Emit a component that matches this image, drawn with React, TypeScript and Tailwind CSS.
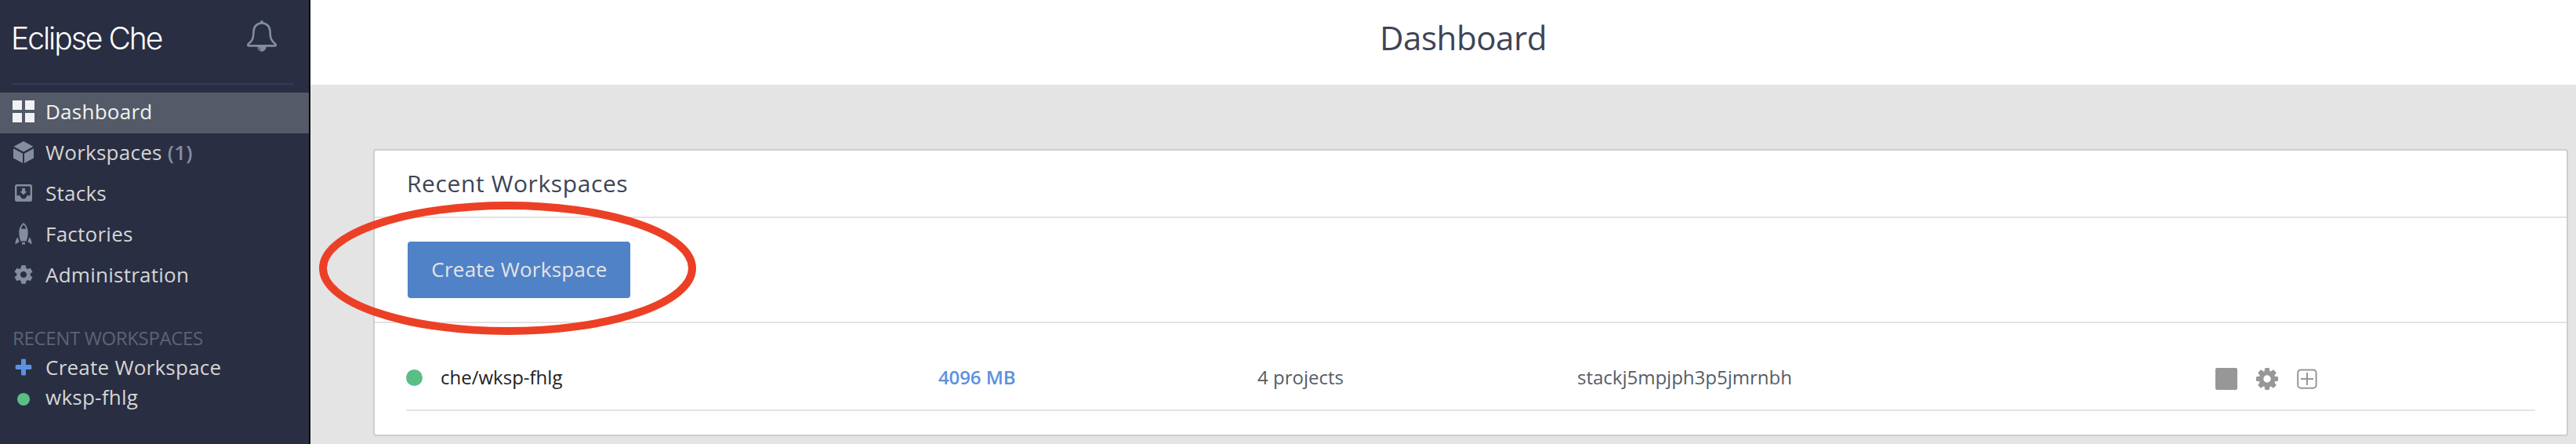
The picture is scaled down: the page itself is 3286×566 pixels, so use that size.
import type { ReactNode } from "react";

const NAV_TEXT = "text-[26px] leading-[52px] tracking-[0.25px] whitespace-nowrap";

function BellIcon() {
  return (
    <svg className="h-[42px] w-[40px]" viewBox="0 0 40 42" fill="none" stroke="#848d9f" strokeWidth="2.6" strokeLinejoin="round">
      <circle cx="20" cy="3" r="2" fill="#848d9f" stroke="none" />
      <path d="M20 4.500C13.500 4.500 9.700 9 9.500 15C9.200 24 8.400 26.500 2.600 31.200C1.900 32.200 2.200 33.400 3.600 33.400H36.400C37.800 33.400 38.100 32.200 37.400 31.200C31.600 26.500 30.800 24 30.500 15C30.300 9 26.500 4.500 20 4.500Z" />
      <path d="M14.400 34a5.600 6.800 0 0 0 11.200 0z" fill="#848d9f" stroke="none" />
      <path d="M16.200 35.400a4.200 4.200 0 0 0 2.600 3.500" stroke="#292e42" strokeWidth="0.800" />
    </svg>
  );
}

function GridIcon() {
  return (
    <svg className="size-[28px]" viewBox="0 0 28 28" fill="#f2f2f2">
      <path d="M0 0h12v12H0zM16 0h12v12H16zM0 16h12v12H0zM16 16h12v12H16z" />
    </svg>
  );
}

function CubeIcon() {
  return (
    <svg className="size-[28px]" viewBox="0 0 28 28" fill="#848d9f">
      <path d="M14 0L26.400 6.700L14 13.400L1.600 6.700ZM1 9.300L13 15.700V28L1 21.400ZM27 9.300L15 15.700V28L27 21.400Z" />
    </svg>
  );
}

function InboxIcon() {
  return (
    <svg className="size-[28px]" viewBox="0 0 28 28" fill="#848d9f">
      <path fillRule="evenodd" d="M5.500 3h17a2.500 2.500 0 0 1 2.500 2.500v17a2.500 2.500 0 0 1-2.500 2.500h-17a2.500 2.500 0 0 1-2.500-2.500v-17a2.500 2.500 0 0 1 2.500-2.500zM5.400 5.400v11.800h4.400a4.200 4.200 0 0 0 8.400 0h4.400V5.400z" />
      <path d="M12 8h4v4h2.600L14 16.600L9.400 12H12z" />
    </svg>
  );
}

function RocketIcon() {
  return (
    <svg className="size-[28px]" viewBox="0 0 28 28" fill="#848d9f">
      <path fillRule="evenodd" d="M14 0C16.800 2.200 19.700 6.500 19.700 12C19.700 17 18.500 20.500 17.600 23.600H10.400C9.500 20.500 8.300 17 8.300 12C8.300 6.500 11.200 2.200 14 0ZM14 2.600C12.600 3.900 11.300 5.600 10.900 7.800H17.100C16.700 5.600 15.400 3.900 14 2.600Z" />
      <path d="M12 25h4v2.600h-4zM6.600 18.600L8.600 24.200L3.400 27.600C3.600 24.300 4.200 20.500 6.600 18.600ZM21.400 18.600L19.400 24.200L24.600 27.600C24.400 24.300 23.800 20.500 21.400 18.600Z" />
    </svg>
  );
}

function SettingsIcon() {
  return (
    <svg className="size-[28px]" viewBox="0 0 24 24" fill="#848d9f">
      <path d="M19.430 12.980c.040-.320.070-.640.070-.980s-.030-.660-.070-.980l2.110-1.650c.190-.150.240-.420.120-.640l-2-3.460c-.120-.220-.390-.300-.610-.220l-2.490 1c-.520-.400-1.080-.730-1.690-.980l-.380-2.650C14.460 2.180 14.250 2 14 2h-4c-.250 0-.460.180-.490.420l-.380 2.650c-.610.250-1.170.590-1.690.980l-2.490-1c-.230-.090-.490 0-.610.220l-2 3.460c-.130.220-.070.490.120.640l2.110 1.650c-.040.320-.070.650-.070.980s.030.660.070.980l-2.110 1.650c-.190.150-.240.420-.120.640l2 3.460c.120.220.390.300.610.220l2.490-1c.520.400 1.080.730 1.690.980l.380 2.650c.030.240.240.420.490.420h4c.250 0 .460-.180.490-.420l.380-2.650c.610-.250 1.170-.590 1.690-.980l2.490 1c.230.090.490 0 .610-.220l2-3.460c.120-.220.070-.490-.120-.640l-2.110-1.650zM12 15.500c-1.930 0-3.500-1.570-3.500-3.500s1.570-3.500 3.500-3.500 3.500 1.570 3.500 3.500-1.570 3.500-3.500 3.500z" />
    </svg>
  );
}

function PlusIcon() {
  return (
    <svg className="size-[28px]" viewBox="0 0 28 28" fill="#5a92df">
      <rect x="11" y="3.500" width="6" height="21" rx="1.500" />
      <rect x="3.700" y="11" width="20.600" height="6" rx="1.500" />
    </svg>
  );
}

function CogIcon() {
  return (
    <svg className="size-[28px]" viewBox="-14 -14 28 28" fill="none">
      <circle r="7.500" stroke="#979797" strokeWidth="5.600" />
      <g fill="#979797">
        {[0, 45, 90, 135, 180, 225, 270, 315].map((angle) => (
          <path key={angle} transform={`rotate(${angle})`} d="M-3.600 -9L-2.800 -13.500Q-2.700 -14 -2.200 -14H2.200Q2.700 -14 2.800 -13.500L3.600 -9Z" />
        ))}
      </g>
    </svg>
  );
}

function AddBoxIcon() {
  return (
    <svg className="size-[26px]" viewBox="0 0 26 26" fill="none" stroke="#979797">
      <rect x="1.200" y="1.400" width="23.400" height="23.400" rx="4" strokeWidth="2" />
      <path d="M13 5v16M5 13h16" strokeWidth="2" />
    </svg>
  );
}

function NavItem({ icon, label, count, active }: { icon: ReactNode; label: string; count?: string; active?: boolean }) {
  return (
    <a className={`flex h-[52px] items-center gap-[14px] pb-[4px] pl-4 ${active ? "bg-[#545a67] text-[#f2f2f2]" : "text-[#d5d5d5]"}`}>
      <span className="flex w-[28px] justify-center">{icon}</span>
      <span className={NAV_TEXT}>
        {label}
        {count && <span className="font-semibold text-[#848d9f]"> {count}</span>}
      </span>
    </a>
  );
}

function Sidebar() {
  return (
    <aside className="flex w-[396px] shrink-0 flex-col border-r-2 border-black bg-[#292e42]">
      <div className="mx-4 flex h-[108px] w-[358px] items-start justify-between border-b-2 border-[#323b5b] pr-[20px]">
        <span className="mt-[24px] -ml-[2px] font-[Inter] text-[39px] leading-[50px] font-light tracking-[-2px] whitespace-nowrap text-white">Eclipse Che</span>
        <span className="mt-[25px]"><BellIcon /></span>
      </div>
      <nav className="mt-[10px] flex flex-col">
        <NavItem active icon={<GridIcon />} label="Dashboard" />
        <NavItem icon={<CubeIcon />} label="Workspaces" count="(1)" />
        <NavItem icon={<InboxIcon />} label="Stacks" />
        <NavItem icon={<RocketIcon />} label="Factories" />
        <NavItem icon={<SettingsIcon />} label="Administration" />
      </nav>
      <h2 className="mt-[37px] pl-4 text-[24px] leading-[32px] tracking-[-0.35px] whitespace-nowrap text-[#5e6375]">RECENT WORKSPACES</h2>
      <div className="mt-[2px] flex flex-col text-[#d5d5d5]">
        <a className="flex h-[38px] items-center gap-[14px] pl-4">
          <PlusIcon />
          <span className={NAV_TEXT}>Create Workspace</span>
        </a>
        <a className="flex h-[38px] items-center gap-[14px] pl-4">
          <span className="flex w-[28px] justify-center pt-[6px]"><span className="size-[16px] rounded-full bg-[#5abe87]" /></span>
          <span className={NAV_TEXT}>wksp-fhlg</span>
        </a>
      </div>
    </aside>
  );
}

function WorkspaceRow() {
  return (
    <div className="mx-[40px] flex h-[112px] items-center border-b-2 border-[#e3e3e3] pt-[28px] text-[24px] leading-[34px] whitespace-nowrap text-[#545d68]">
      <span className="mt-[1px] size-[21px] rounded-full bg-[#5abe87]" />
      <span className="ml-[23px] w-[635px] text-[#222222]">che/wksp-fhlg</span>
      <span className="w-[407px] font-semibold tracking-[-0.1px] text-[#5a92df]">4096 MB</span>
      <span className="w-[408px]">4 projects</span>
      <span className="w-[814px]">stackj5mpjph3p5jmrnbh</span>
      <span className="flex items-center gap-[24px] pt-[4px]">
        <span className="size-[28px] rounded-[2px] bg-[#979797]" />
        <CogIcon />
        <AddBoxIcon />
      </span>
    </div>
  );
}

export default function App() {
  return (
    <div className="relative flex h-[566px] w-[3286px] overflow-hidden bg-[#e4e4e4] font-['Open_Sans',sans-serif]">
      <Sidebar />
      <main className="flex grow flex-col">
        <header className="flex h-[108px] justify-center bg-white pr-[50px]">
          <h1 className="mt-[18px] ml-[101px] text-[42px] leading-[60px] tracking-[-0.4px] whitespace-nowrap text-[#3d4456]">Dashboard</h1>
        </header>
        <section className="mt-[82px] mr-[10px] ml-[80px] flex h-[366px] flex-col rounded-[4px] border-2 border-[#cdcdcd] bg-white">
          <h2 className="h-[86px] border-b-2 border-[#e3e3e3] pl-[41px] text-[30px] leading-[84px] tracking-[0.6px] whitespace-nowrap text-[#3d4456]">Recent Workspaces</h2>
          <div className="flex h-[134px] items-center border-b-2 border-[#e3e3e3] pl-[42px]">
            <button className="h-[72px] w-[284px] rounded-[4px] bg-[#5082c8] pb-[2px] pl-[1px] text-[26px] tracking-[0.25px] whitespace-nowrap text-[#e4e4e4]">Create Workspace</button>
          </div>
          <WorkspaceRow />
        </section>
      </main>
      <svg className="pointer-events-none absolute top-[256px] left-[406px] h-[172px] w-[483px]" viewBox="0 0 483 172" fill="none">
        <ellipse cx="241.500" cy="86" rx="235.500" ry="80" stroke="#ec4026" strokeWidth="10" />
      </svg>
    </div>
  );
}
